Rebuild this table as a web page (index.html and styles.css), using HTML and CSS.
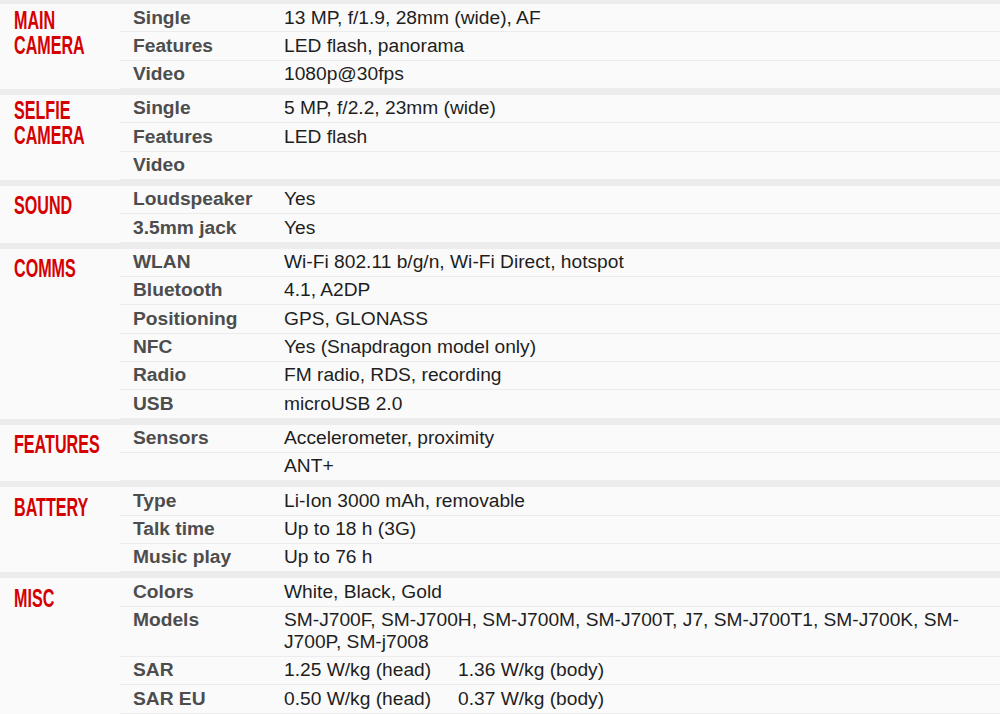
FILE: index.html
```html
<!DOCTYPE html>
<html lang="en">
<head>
<meta charset="utf-8">
<title>Specs</title>
<link rel="stylesheet" href="styles.css">
</head>
<body>
<div class="specs">
  <section class="group first">
    <h2 class="cat two"><span>MAIN<br>CAMERA</span></h2>
    <div class="rows">
      <div class="row"><div class="ttl">Single</div><div class="nfo">13 MP, f/1.9, 28mm (wide), AF</div></div>
      <div class="row"><div class="ttl">Features</div><div class="nfo">LED flash, panorama</div></div>
      <div class="row"><div class="ttl">Video</div><div class="nfo">1080p@30fps</div></div>
    </div>
  </section>
  <section class="group">
    <h2 class="cat two"><span>SELFIE<br>CAMERA</span></h2>
    <div class="rows">
      <div class="row"><div class="ttl">Single</div><div class="nfo">5 MP, f/2.2, 23mm (wide)</div></div>
      <div class="row"><div class="ttl">Features</div><div class="nfo">LED flash</div></div>
      <div class="row"><div class="ttl">Video</div><div class="nfo"></div></div>
    </div>
  </section>
  <section class="group">
    <h2 class="cat"><span>SOUND</span></h2>
    <div class="rows">
      <div class="row"><div class="ttl">Loudspeaker</div><div class="nfo">Yes</div></div>
      <div class="row"><div class="ttl">3.5mm jack</div><div class="nfo">Yes</div></div>
    </div>
  </section>
  <section class="group">
    <h2 class="cat"><span>COMMS</span></h2>
    <div class="rows">
      <div class="row"><div class="ttl">WLAN</div><div class="nfo">Wi-Fi 802.11 b/g/n, Wi-Fi Direct, hotspot</div></div>
      <div class="row"><div class="ttl">Bluetooth</div><div class="nfo">4.1, A2DP</div></div>
      <div class="row"><div class="ttl">Positioning</div><div class="nfo">GPS, GLONASS</div></div>
      <div class="row"><div class="ttl">NFC</div><div class="nfo">Yes (Snapdragon model only)</div></div>
      <div class="row"><div class="ttl">Radio</div><div class="nfo">FM radio, RDS, recording</div></div>
      <div class="row"><div class="ttl">USB</div><div class="nfo">microUSB 2.0</div></div>
    </div>
  </section>
  <section class="group">
    <h2 class="cat"><span>FEATURES</span></h2>
    <div class="rows">
      <div class="row"><div class="ttl">Sensors</div><div class="nfo">Accelerometer, proximity</div></div>
      <div class="row"><div class="ttl"></div><div class="nfo">ANT+</div></div>
    </div>
  </section>
  <section class="group">
    <h2 class="cat"><span>BATTERY</span></h2>
    <div class="rows">
      <div class="row"><div class="ttl">Type</div><div class="nfo">Li-Ion 3000 mAh, removable</div></div>
      <div class="row"><div class="ttl">Talk time</div><div class="nfo">Up to 18 h (3G)</div></div>
      <div class="row"><div class="ttl">Music play</div><div class="nfo">Up to 76 h</div></div>
    </div>
  </section>
  <section class="group">
    <h2 class="cat"><span>MISC</span></h2>
    <div class="rows">
      <div class="row"><div class="ttl">Colors</div><div class="nfo">White, Black, Gold</div></div>
      <div class="row"><div class="ttl">Models</div><div class="nfo">SM-J700F, SM-J700H, SM-J700M, SM-J700T, J7, SM-J700T1, SM-J700K, SM-J700P, SM-j7008</div></div>
      <div class="row"><div class="ttl">SAR</div><div class="nfo"><span class="sar">1.25 W/kg (head)</span>1.36 W/kg (body)</div></div>
      <div class="row"><div class="ttl">SAR EU</div><div class="nfo"><span class="sar">0.50 W/kg (head)</span>0.37 W/kg (body)</div></div>
    </div>
  </section>
</div>
</body>
</html>
```

FILE: styles.css
```css
html, body {
  margin: 0;
  padding: 0;
  background: #fafafa;
}

body {
  font-family: "Liberation Sans", Arial, sans-serif;
  font-size: 19.2px;
  color: #1e1e1e;
  overflow: hidden;
}

.specs {
  width: 1000px;
}

.group {
  display: flex;
  border-top: 6px solid #ececec;
}

.group.first {
  border-top-width: 4px;
}

.cat {
  width: 120px;
  flex: none;
  margin: 0;
  padding: 7.5px 0 0 14px;
  box-sizing: border-box;
  font-family: "Liberation Sans", Arial, sans-serif;
  font-weight: bold;
  font-size: 26px;
  line-height: 25px;
  color: #d50000;
  white-space: nowrap;
}

.cat.two {
  padding-top: 3.5px;
}

.cat span {
  display: inline-block;
  transform: scaleX(0.62);
  transform-origin: left top;
}

.rows {
  flex: 1;
}

.row {
  display: flex;
  padding: 2.5px 0 2.83px;
  line-height: 22px;
  border-bottom: 1px solid #ececec;
}

.ttl {
  width: 164px;
  flex: none;
  box-sizing: border-box;
  padding-left: 13px;
  font-weight: bold;
  color: #4d4d4d;
}

.nfo {
  flex: 1;
  padding-right: 28px;
  min-height: 22px;
}

.sar {
  display: inline-block;
  width: 174px;
}
```
